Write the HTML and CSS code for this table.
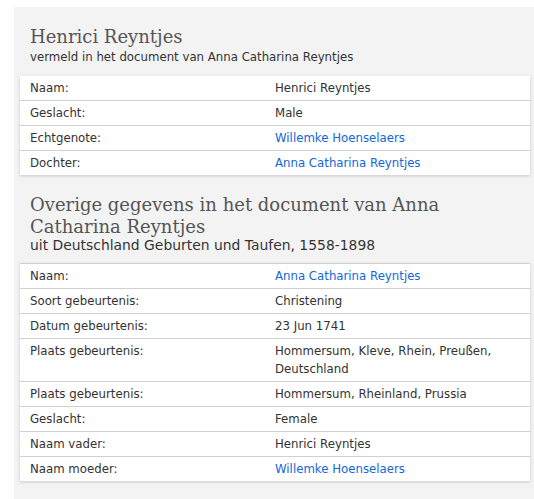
FILE: index.html
```html
<!DOCTYPE html>
<html lang="nl">
<head>
<meta charset="utf-8">
<title>Henrici Reyntjes</title>
<link rel="stylesheet" href="styles.css">
</head>
<body>
<div class="panel">
  <section class="section">
    <header class="section-head">
      <h2 class="title">Henrici Reyntjes</h2>
      <p class="subtitle">vermeld in het document van Anna Catharina Reyntjes</p>
    </header>
    <div class="facts">
      <div class="row"><div class="label">Naam:</div><div class="value">Henrici Reyntjes</div></div>
      <div class="row"><div class="label">Geslacht:</div><div class="value">Male</div></div>
      <div class="row"><div class="label">Echtgenote:</div><div class="value"><a href="#">Willemke Hoenselaers</a></div></div>
      <div class="row"><div class="label">Dochter:</div><div class="value"><a href="#">Anna Catharina Reyntjes</a></div></div>
    </div>
  </section>
  <section class="section">
    <header class="section-head">
      <h2 class="title">Overige gegevens in het document van Anna Catharina Reyntjes</h2>
      <p class="subtitle subtitle-large">uit Deutschland Geburten und Taufen, 1558-1898</p>
    </header>
    <div class="facts facts-bordered">
      <div class="row"><div class="label">Naam:</div><div class="value"><a href="#">Anna Catharina Reyntjes</a></div></div>
      <div class="row"><div class="label">Soort gebeurtenis:</div><div class="value">Christening</div></div>
      <div class="row"><div class="label">Datum gebeurtenis:</div><div class="value">23 Jun 1741</div></div>
      <div class="row"><div class="label">Plaats gebeurtenis:</div><div class="value">Hommersum, Kleve, Rhein, Preußen, Deutschland</div></div>
      <div class="row"><div class="label">Plaats gebeurtenis:</div><div class="value">Hommersum, Rheinland, Prussia</div></div>
      <div class="row"><div class="label">Geslacht:</div><div class="value">Female</div></div>
      <div class="row"><div class="label">Naam vader:</div><div class="value">Henrici Reyntjes</div></div>
      <div class="row"><div class="label">Naam moeder:</div><div class="value"><a href="#">Willemke Hoenselaers</a></div></div>
    </div>
  </section>
</div>
</body>
</html>
```
FILE: styles.css
```css
html, body {
  margin: 0;
  padding: 0;
  background: #ffffff;
}
body {
  font-family: "DejaVu Sans", Verdana, sans-serif;
  font-size: 11.75px;
  line-height: 18px;
  color: #333333;
  overflow: hidden;
}
.panel {
  margin: 7px 0 0 14px;
  background: #f3f3f3;
  padding: 0 4px 18px 6px;
  min-height: 480px;
}
.section-head {
  padding: 19px 10px 10px 10px;
}
.section + .section .section-head {
  padding-top: 19px;
  padding-bottom: 9px;
}
.title {
  margin: 0;
  font-family: "DejaVu Serif", Georgia, serif;
  font-weight: normal;
  font-size: 18px;
  line-height: 22px;
  color: #555555;
}
.subtitle {
  margin: 0;
  font-size: 11.75px;
  color: #333333;
}
.subtitle-large {
  font-size: 13.9px;
  margin-top: -2px;
}
.facts {
  background: #ffffff;
  box-shadow: 0 1px 3px rgba(0, 0, 0, 0.18);
}
.facts-bordered {
  border-top: 1px solid #d0d0d0;
}
.row {
  display: grid;
  grid-template-columns: 245px 1fr;
  border-bottom: 1px solid #d0d0d0;
}
.row:last-child {
  border-bottom: none;
}
.label, .value {
  padding: 3px 10px 3px 10px;
}
.value a {
  color: #1467d8;
  text-decoration: none;
}
```
